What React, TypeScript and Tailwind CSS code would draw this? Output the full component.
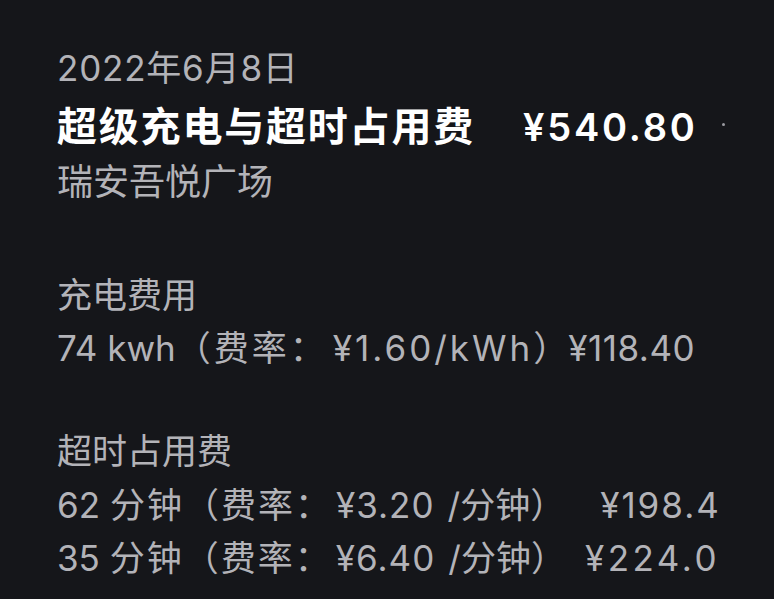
import React from "react";

const font = { fontFamily: 'Inter, "Noto Sans CJK SC", sans-serif' };

export default function App() {
  return (
    <div
      className="w-[774px] h-[599px] bg-[#15161a] overflow-hidden relative pl-[57px] pt-[42px] text-[#b3b3b8]"
      style={font}
    >
      <div className="text-[35px] leading-[52px] tracking-[0.8px]">2022年6月8日</div>
      <div className="mt-[5px] flex items-center h-[56px] text-white font-bold">
        <span className="text-[40px] tracking-[1.8px]">超级充电与超时占用费</span>
        <span className="ml-[48px] text-[38px] font-semibold tracking-[2.8px]">¥540.80</span>
      </div>
      <div className="text-[36px] leading-[54px]">瑞安吾悦广场</div>

      <div className="mt-[59px] text-[35px] leading-[54px]">充电费用</div>
      <div className="text-[35px] leading-[52px] whitespace-nowrap flex">
        <span>74 kwh</span>
        <span className="tracking-[3px]">（费率：</span>
        <span className="ml-[5px] tracking-[3px]">¥1.60/kWh</span>
        <span>）</span>
        <span className="tracking-[0.5px]">¥118.40</span>
      </div>

      <div className="mt-[50px] text-[35px] leading-[54px]">超时占用费</div>
      <div className="text-[35px] leading-[54px] whitespace-nowrap flex">
        <span>62&nbsp;</span>
        <span className="tracking-[2px]">分钟（费率：</span>
        <span className="ml-[4px] tracking-[1px]">¥3.20</span>
        <span className="ml-[13px]">/分钟）</span>
        <span className="ml-[35px] tracking-[2px]">¥198.4</span>
      </div>
      <div className="text-[35px] leading-[52px] whitespace-nowrap flex">
        <span>35&nbsp;</span>
        <span className="tracking-[2px]">分钟（费率：</span>
        <span className="ml-[4px] tracking-[1px]">¥6.40</span>
        <span className="ml-[13px]">/分钟）</span>
        <span className="ml-[19px] tracking-[3.5px]">¥224.0</span>
      </div>

      <div className="absolute left-[722px] top-[123px] w-[3px] h-[3px] rounded-full bg-[#9a9aa0]" />
    </div>
  );
}
